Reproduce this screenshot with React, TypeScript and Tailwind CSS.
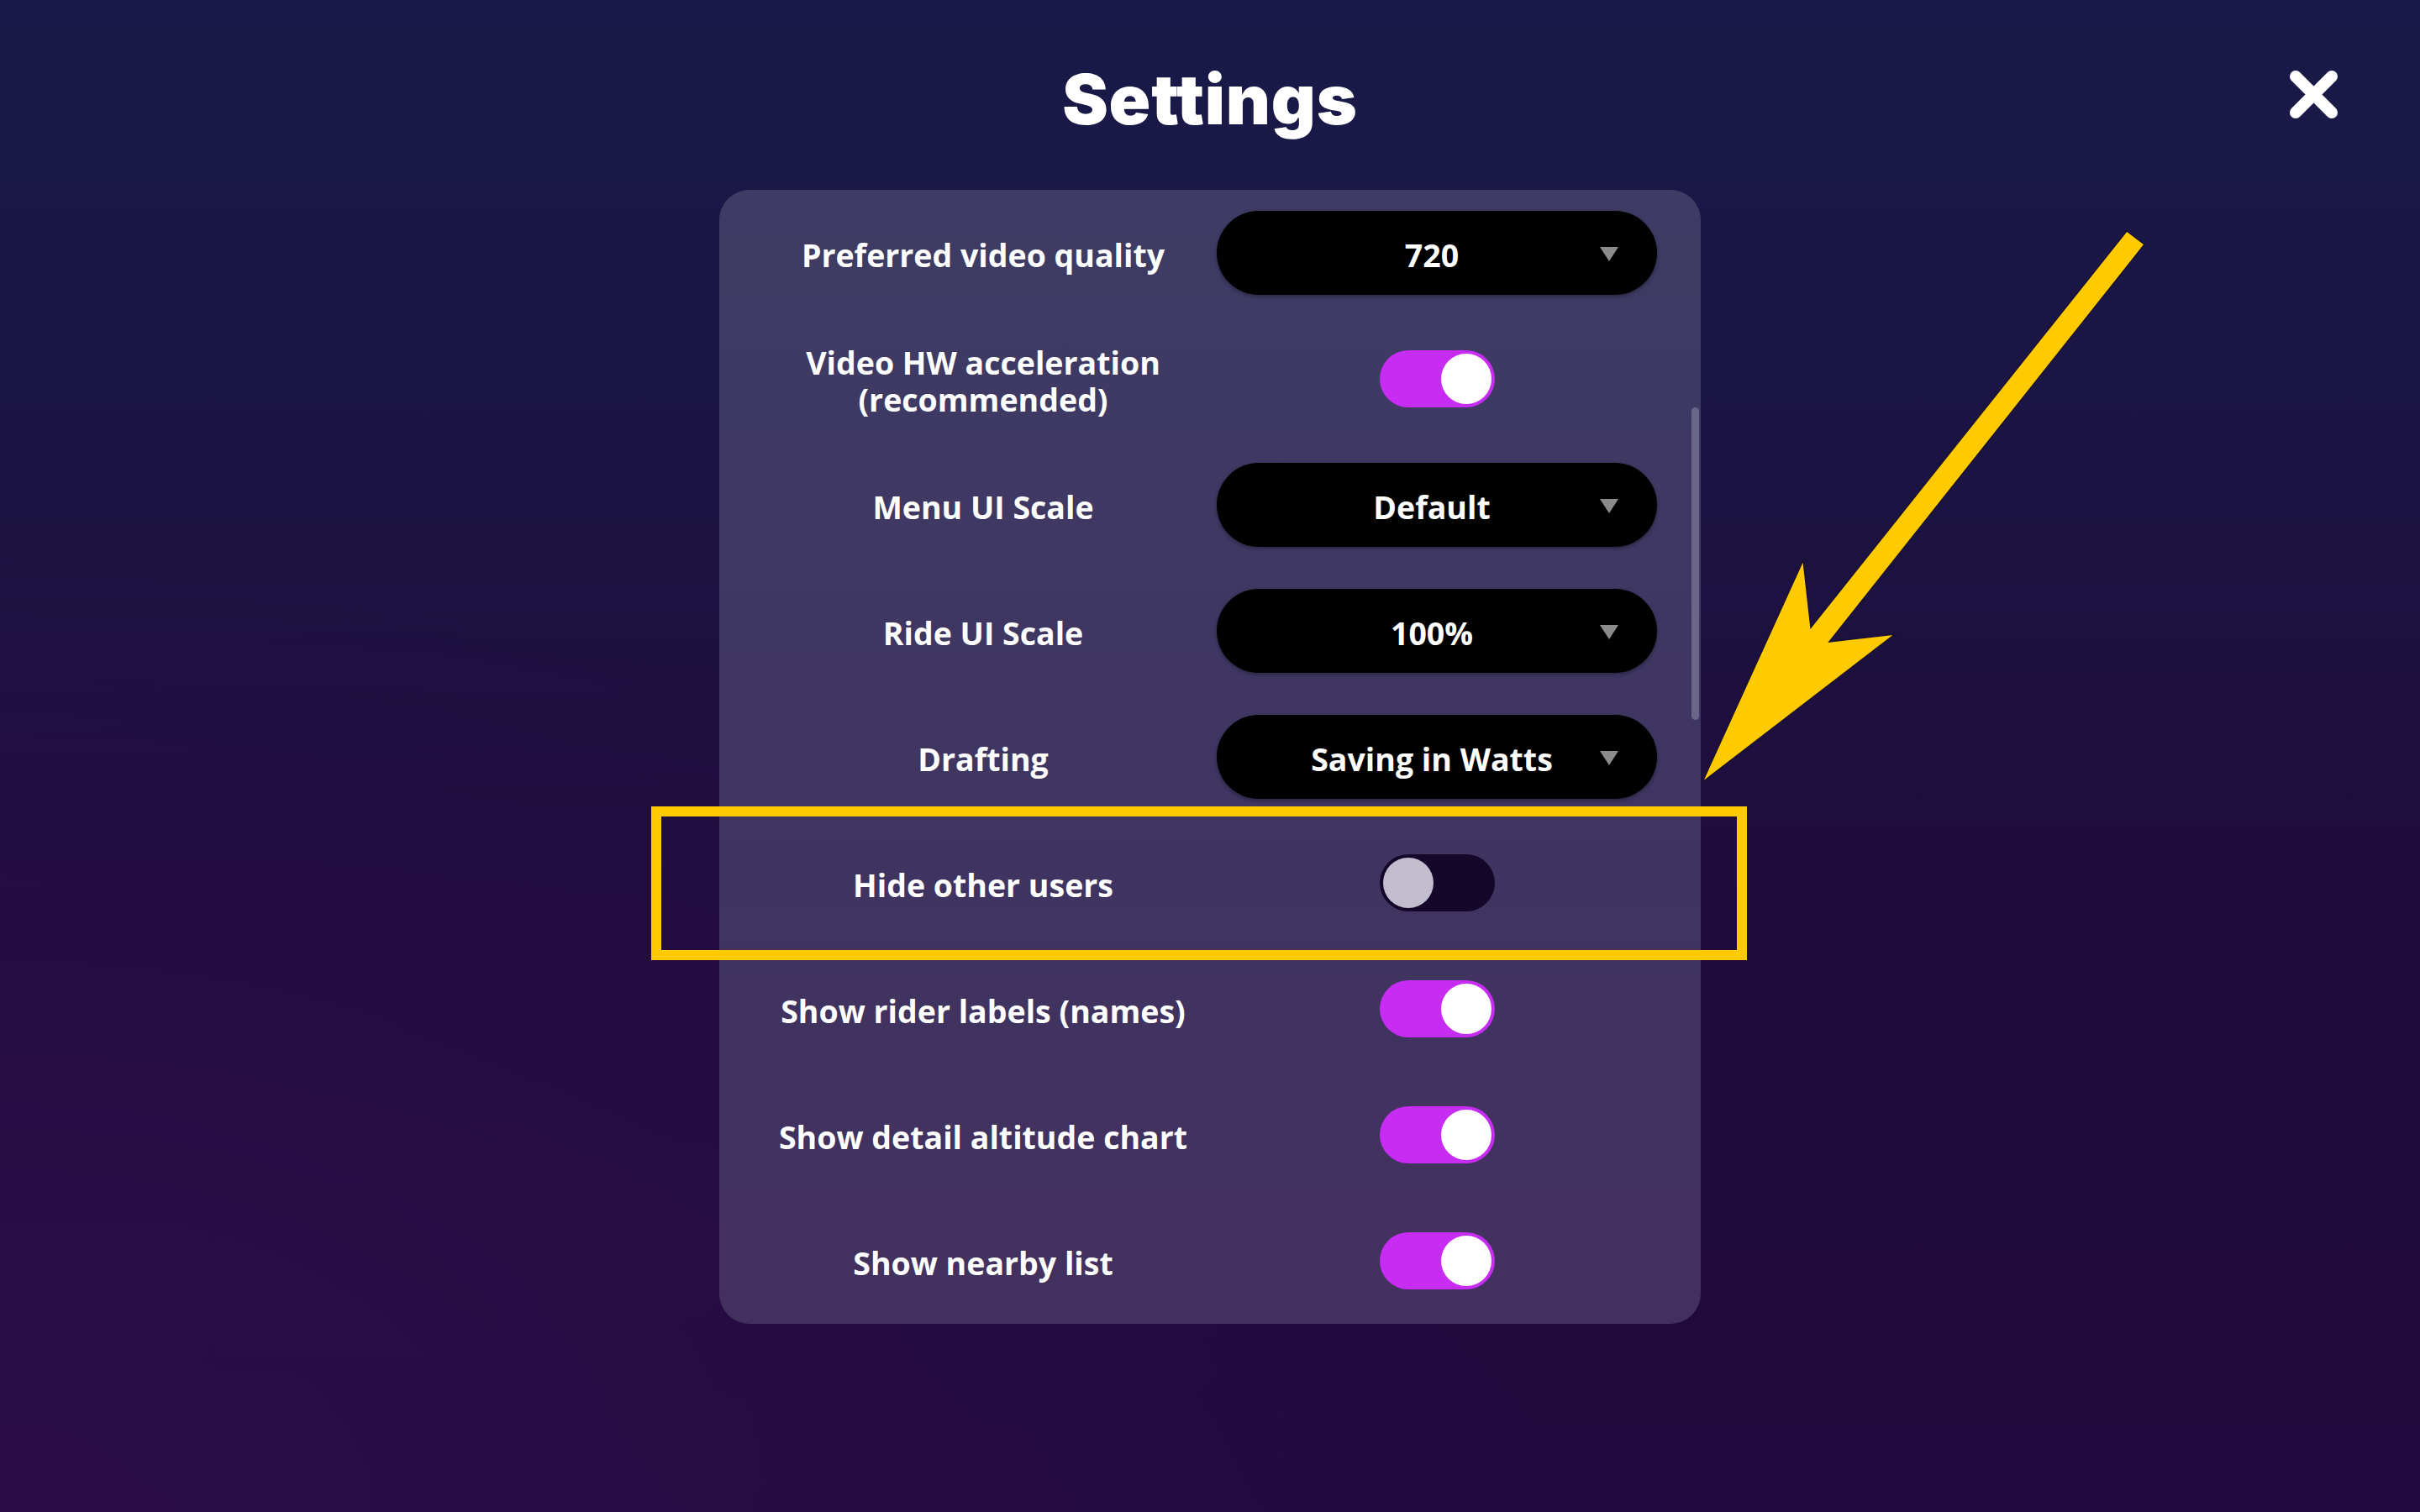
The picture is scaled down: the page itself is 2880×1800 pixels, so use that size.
import { useState } from 'react';

type Row =
  | { kind: 'select'; label: string; value: string }
  | { kind: 'toggle'; label: string; on: boolean };

const rows: Row[] = [
  { kind: 'select', label: 'Preferred video quality', value: '720' },
  { kind: 'toggle', label: 'Video HW acceleration\n(recommended)', on: true },
  { kind: 'select', label: 'Menu UI Scale', value: 'Default' },
  { kind: 'select', label: 'Ride UI Scale', value: '100%' },
  { kind: 'select', label: 'Drafting', value: 'Saving in Watts' },
  { kind: 'toggle', label: 'Hide other users', on: false },
  { kind: 'toggle', label: 'Show rider labels (names)', on: true },
  { kind: 'toggle', label: 'Show detail altitude chart', on: true },
  { kind: 'toggle', label: 'Show nearby list', on: true },
];

function Select({ value }: { value: string }) {
  return (
    <div className="relative flex h-[100px] w-[524px] items-center justify-center rounded-full bg-black pr-[12px] shadow-[0_2px_4px_rgba(0,0,0,0.35)]">
      <span className="pt-[6px] text-[37.5px] font-bold text-white">{value}</span>
      <svg className="absolute right-[46px] top-[43px]" width="22" height="17" viewBox="0 0 22 17">
        <polygon points="0,0 22,0 11,17" fill="#8b8b8b" />
      </svg>
    </div>
  );
}

function Toggle({ initial }: { initial: boolean }) {
  const [on, setOn] = useState(initial);
  return (
    <button
      onClick={() => setOn(!on)}
      className={
        'flex h-[68px] w-[137px] items-center rounded-full px-[4px] ' +
        (on ? 'justify-end bg-[#c62cf1]' : 'justify-start bg-[#14072a]')
      }
    >
      <span
        className={
          'block h-[60px] w-[60px] rounded-full ' + (on ? 'bg-white' : 'bg-[#c1bdce]')
        }
      />
    </button>
  );
}

export default function App() {
  return (
    <div
      className="relative h-[1800px] w-[2880px] overflow-hidden bg-[linear-gradient(180deg,#191a49_0%,#1b1442_30%,#1f0c3c_60%,#210a3d_100%)] text-white"
      style={{ fontFamily: '"Open Sans", "Noto Sans", sans-serif' }}
    >
      <div className="absolute inset-0 bg-[radial-gradient(ellipse_at_0%_100%,rgba(48,14,78,0.75)_0%,rgba(48,14,78,0)_45%)]" />

      {/* header */}
      <header className="relative flex h-[226px] justify-center pt-[78px]">
        <h1
          className="text-[82px] font-black leading-none tracking-[0.01em]"
          style={{ fontFamily: 'Inter, "Lato", sans-serif' }}
        >
          Settings
        </h1>
        <button className="absolute right-[97px] top-[83px]">
          <svg width="59" height="59" viewBox="0 0 59 59">
            <path d="M8 8 L51 51 M51 8 L8 51" stroke="white" strokeWidth="14" strokeLinecap="round" />
          </svg>
        </button>
      </header>

      {/* panel */}
      <main className="relative flex justify-center">
        <div className="relative w-[1168px] rounded-[36px] bg-[linear-gradient(180deg,#3e3c64_0%,#3f3561_55%,#43305e_100%)] pl-[36px]">
          {rows.map((row) => (
            <div key={row.label} className="grid h-[150px] grid-cols-[556px_524px] items-center">
              <div className="whitespace-pre-line pt-[6px] text-center text-[37.5px] font-bold leading-[44px]">
                {row.label}
              </div>
              <div className="flex justify-center">
                {row.kind === 'select' ? <Select value={row.value} /> : <Toggle initial={row.on} />}
              </div>
            </div>
          ))}
          {/* scrollbar */}
          <div className="absolute right-[2px] top-[259px] h-[372px] w-[9px] rounded-full bg-[#6a6689]" />
        </div>
      </main>

      {/* annotation: highlight box */}
      <div className="absolute left-[775px] top-[960px] h-[183px] w-[1304px] border-[12px] border-[#ffca00]" />

      {/* annotation: arrow */}
      <svg className="absolute left-0 top-0" width="2880" height="1800" viewBox="0 0 2880 1800">
        <polygon
          points="2531,275 2155,747 2146,667 2026,931 2255,755 2177,764 2552,291"
          fill="#ffca00"
          stroke="#1a1030"
          strokeWidth="1.5"
          strokeLinejoin="miter"
        />
      </svg>
    </div>
  );
}
